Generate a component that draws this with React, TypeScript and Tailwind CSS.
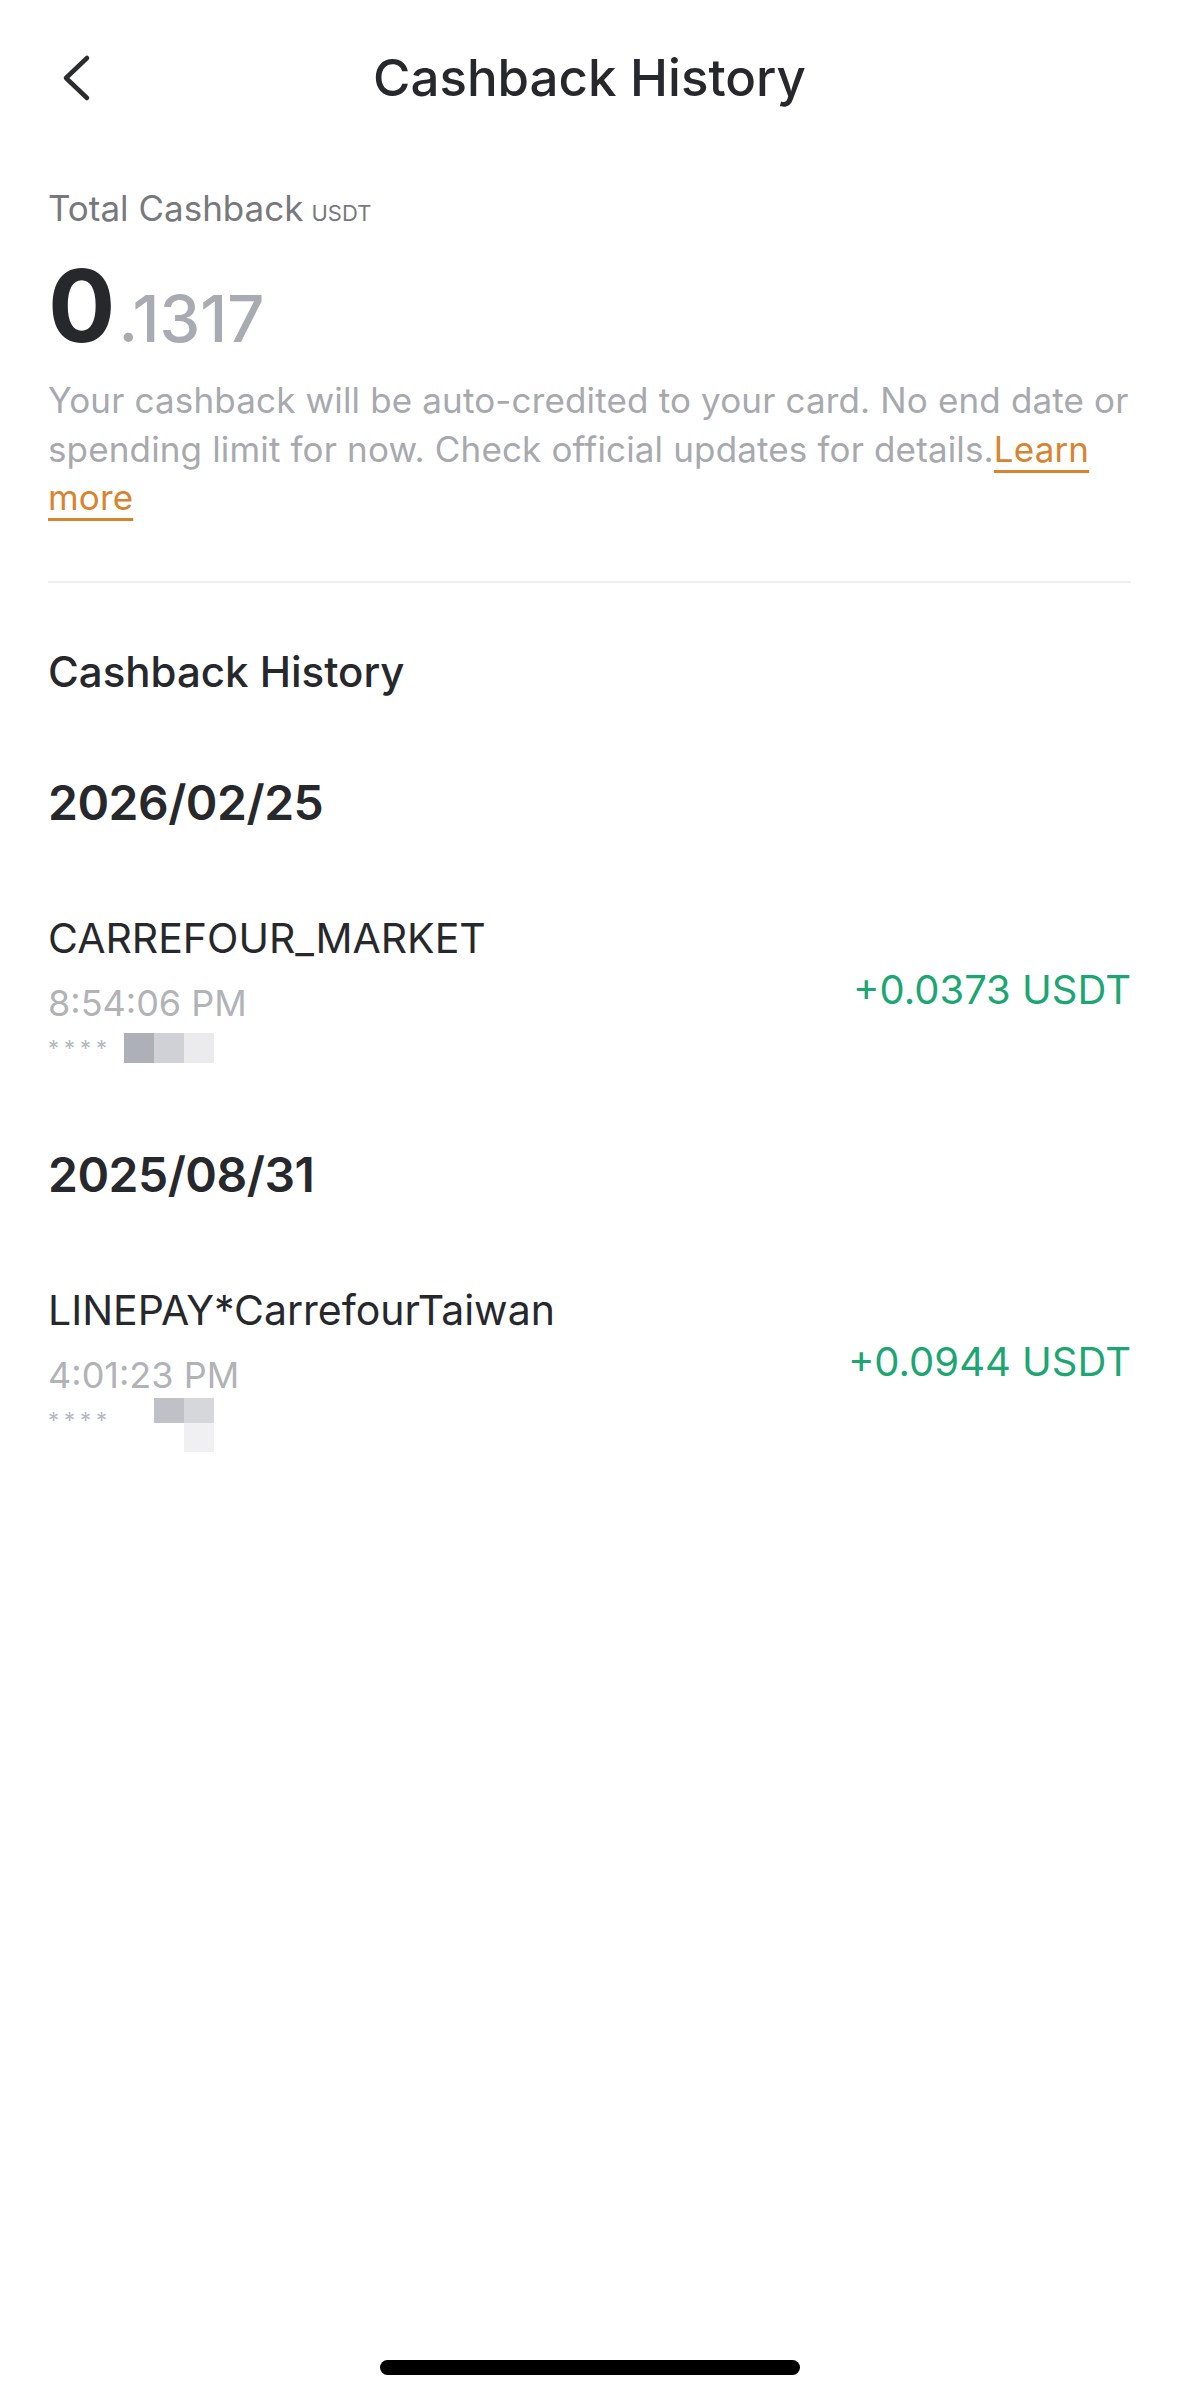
import React from 'react';

const font = { fontFamily: 'Inter, "Noto Sans", sans-serif' };

function BackIcon() {
  return (
    <svg width="30" height="48" viewBox="0 0 30 48" fill="none">
      <polyline
        points="25,4 4,24 25,44"
        stroke="#2a2c30"
        strokeWidth="4.5"
        strokeLinecap="round"
        strokeLinejoin="round"
      />
    </svg>
  );
}

type Tx = {
  date: string;
  merchant: string;
  time: string;
  amount: string;
  blur: 'a' | 'b';
};

const txs: Tx[] = [
  { date: '2026/02/25', merchant: 'CARREFOUR_MARKET', time: '8:54:06 PM', amount: '+0.0373 USDT', blur: 'a' },
  { date: '2025/08/31', merchant: 'LINEPAY*CarrefourTaiwan', time: '4:01:23 PM', amount: '+0.0944 USDT', blur: 'b' },
];

// pixelated card digits, as blurred in the screenshot
function CardMask({ kind }: { kind: 'a' | 'b' }) {
  if (kind === 'a') {
    return (
      <div className="flex h-[30px]">
        <div className="w-[30px] h-[30px] bg-[#aeb0b8]" />
        <div className="w-[30px] h-[30px] bg-[#d0d1d6]" />
        <div className="w-[30px] h-[30px] bg-[#ebebee]" />
      </div>
    );
  }
  return (
    <div className="flex ml-[30px] -mt-[7px]">
      <div className="w-[30px] h-[25px] bg-[#c0c1c7]" />
      <div className="flex flex-col">
        <div className="w-[30px] h-[25px] bg-[#d6d7db]" />
        <div className="w-[30px] h-[29px] bg-[#f0f0f2]" />
      </div>
    </div>
  );
}

function TxItem({ tx }: { tx: Tx }) {
  return (
    <div>
      <div className="h-[60px] leading-[60px] text-[48px] tracking-[-0.5px] font-semibold text-[#26282c]">{tx.date}</div>
      <div className="mt-[80px] flex items-center justify-between">
        <div className="flex flex-col">
          <div className="h-[50px] leading-[50px] text-[41px] text-[#26282c]">{tx.merchant}</div>
          <div className="mt-[18px] h-[44px] leading-[44px] text-[36px] text-[#b1b3b7]">{tx.time}</div>
          <div className="mt-[8px] h-[30px] flex items-start gap-[12px]">
            <span className="text-[22px] leading-[30px] tracking-[5px] text-[#b6b8bd]">****</span>
            <CardMask kind={tx.blur} />
          </div>
        </div>
        <div className="mt-[4px] text-[40px] text-[#1ca673]">{tx.amount}</div>
      </div>
    </div>
  );
}

export default function App() {
  return (
    <div className="min-h-[2399px] flex flex-col bg-white" style={font}>
      <header className="h-[155px] grid grid-cols-[1fr_auto_1fr] items-center">
        <div className="pl-[62px] flex items-center">
          <BackIcon />
        </div>
        <h1 className="text-[51px] font-medium text-[#26282c] leading-[155px]">Cashback History</h1>
        <div />
      </header>

      <main className="px-[48px] flex flex-col">
        <div className="mt-[31px] h-[44px] flex items-baseline leading-[44px]">
          <span className="text-[35px] text-[#77797d]">Total Cashback</span>
          <span className="ml-[8px] text-[22px] text-[#77797d]">USDT</span>
        </div>

        <div className="mt-[20px] h-[106px] flex items-end">
          <span className="text-[100px] leading-[100px] font-bold text-[#26282c]">0</span>
          <span className="ml-[3px] mb-[2px] text-[65px] leading-[70px] font-medium text-[#a9abb2]">.1317</span>
        </div>

        <p className="mt-[20px] text-[35px] leading-[48.5px] tracking-[0.15px] text-[#a7a9ae]">
          Your cashback will be auto-credited to your card. No end date or spending limit for now. Check official updates for details.
          <a className="text-[#d8842e] underline decoration-[3px] underline-offset-[8px]">Learn</a>{' '}
          <a className="text-[#d8842e] underline decoration-[3px] underline-offset-[8px]">more</a>
        </p>

        <div className="mt-[59px] h-[2px] bg-[#efefef]" />

        <h2 className="mt-[65px] h-[48px] leading-[48px] text-[42px] font-medium text-[#26282c]">Cashback History</h2>

        <div className="mt-[77px] flex flex-col gap-[82px]">
          {txs.map((tx) => (
            <TxItem key={tx.date} tx={tx} />
          ))}
        </div>
      </main>

      <div className="flex-1" />
      <div className="flex justify-center pb-[24px]">
        <div className="w-[420px] h-[15px] rounded-full bg-black" />
      </div>
    </div>
  );
}
